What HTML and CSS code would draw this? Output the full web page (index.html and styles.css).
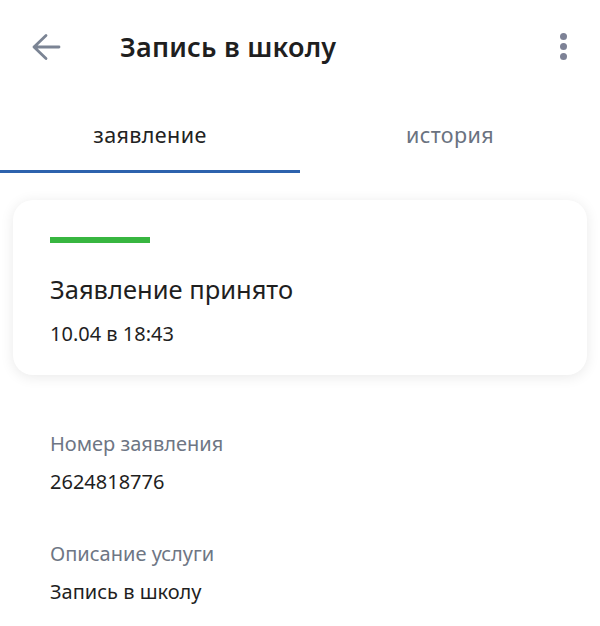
FILE: index.html
```html
<!DOCTYPE html>
<html lang="ru">
    <head>
        <title>Запись в школу</title>
        <meta charset="utf-8">
        <meta name="viewport" content="width=device-width, initial-scale=1">
        <link rel="stylesheet" href="styles.css">
    </head>
    <body>
        <!-- top bar -->
        <div class="topbar">
            <div class="back">
                <svg width="30" height="28" viewBox="0 0 30 28">
                    <path d="M28 14H3M15 2.5L3 14l12 11.5" fill="none" stroke="#7b8494" stroke-width="2.8" stroke-linecap="round" stroke-linejoin="round"/>
                </svg>
            </div>
            <h1 class="title">Запись в школу</h1>
            <div class="more">
                <span></span><span></span><span></span>
            </div>
        </div>

        <!-- tabs -->
        <div class="tabs">
            <div class="tab tab-active">заявление</div>
            <div class="tab">история</div>
        </div>

        <!-- status card -->
        <div class="card">
            <div class="status-bar"></div>
            <div class="status">Заявление принято</div>
            <div class="date">10.04 в 18:43</div>
        </div>

        <!-- details -->
        <div class="details">
            <div class="field">
                <div class="label">Номер заявления</div>
                <div class="value">2624818776</div>
            </div>
            <div class="field">
                <div class="label">Описание услуги</div>
                <div class="value">Запись в школу</div>
            </div>
        </div>
    </body>
</html>
```

FILE: styles.css
```css
html, body {
    margin: 0;
    padding: 0;
    background-color: #fff;
    color: #1f1f1f;
    font-family: "Noto Sans", "Open Sans", sans-serif;
}

.topbar {
    display: flex;
    align-items: center;
    height: 93px;
    padding: 0 33px 0 31px;
}

.back {
    width: 89px;
    display: flex;
}

.title {
    flex: 1;
    margin: 0;
    font-size: 27px;
    line-height: 36px;
    font-weight: 600;
    letter-spacing: 0.2px;
}

.more {
    display: flex;
    flex-direction: column;
    gap: 3px;
}

.more span {
    width: 7px;
    height: 7px;
    border-radius: 50%;
    background-color: #7d8296;
}

.tabs {
    display: flex;
    height: 80px;
}

.tab {
    flex: 1;
    display: flex;
    justify-content: center;
    padding-top: 28px;
    font-size: 21.5px;
    line-height: 28px;
    color: #6a7280;
    letter-spacing: 0.4px;
    box-sizing: border-box;
}

.tab-active {
    color: #222;
    border-bottom: 3px solid #2d62ad;
}

.card {
    margin: 27px 13px 0;
    padding: 37px 37px 28px;
    border-radius: 20px;
    background-color: #fff;
    box-shadow: 0 2px 14px rgba(0, 0, 0, 0.09);
}

.status-bar {
    width: 100px;
    height: 6px;
    background-color: #38b640;
}

.status {
    margin-top: 30px;
    font-size: 25.5px;
    line-height: 32px;
}

.date {
    margin-top: 16px;
    font-size: 20px;
    line-height: 26px;
}

.details {
    padding: 56px 50px 0;
}

.field {
    margin-bottom: 46px;
}

.label {
    font-size: 20px;
    line-height: 26px;
    color: #6e7684;
}

.value {
    margin-top: 12px;
    font-size: 20px;
    line-height: 26px;
}
```
